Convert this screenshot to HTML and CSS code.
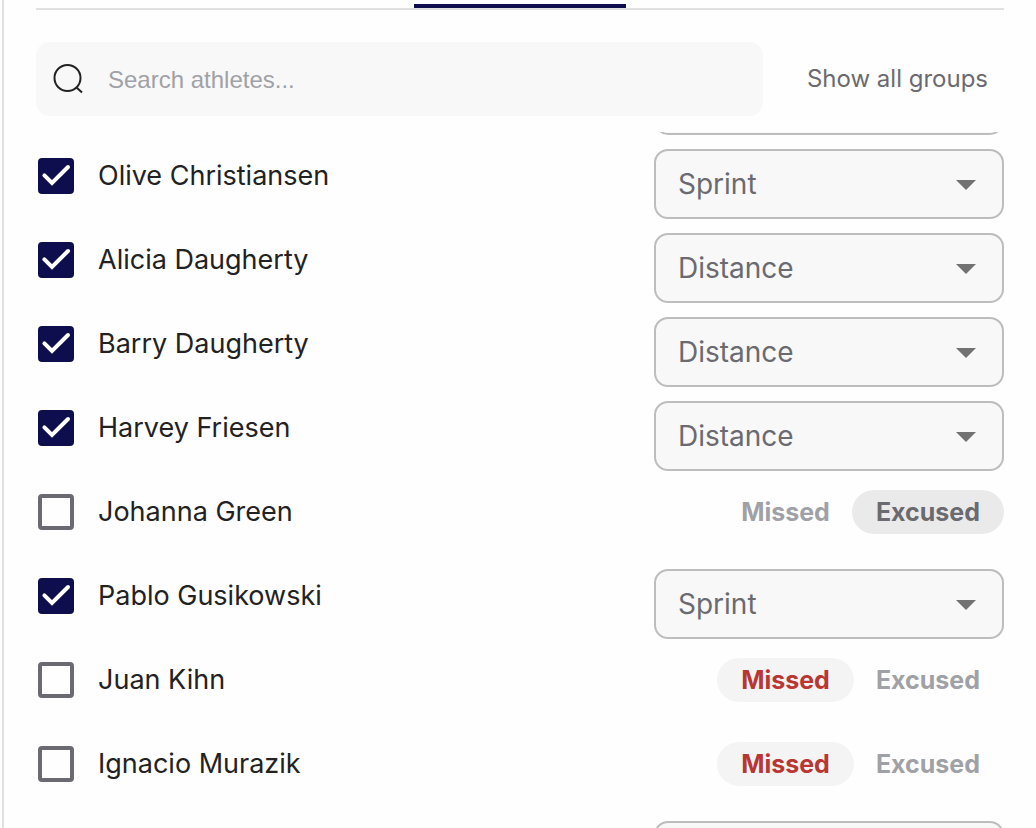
FILE: index.html
```html
<!DOCTYPE html>
<html lang="en">
<head>
    <meta charset="UTF-8">
    <meta name="viewport" content="width=device-width, initial-scale=1.0">
    <title>Attendance</title>
    <link rel="stylesheet" href="styles.css">
</head>
<body>
    <main class="panel">
        <div class="tabs">
            <div class="tab-indicator"></div>
        </div>

        <div class="toolbar">
            <label class="search">
                <svg class="search-icon" viewBox="0 0 32 32" aria-hidden="true">
                    <circle cx="15.5" cy="15" r="13"/>
                    <path d="M24.5 24.5L30 29.5"/>
                </svg>
                <input type="text" placeholder="Search athletes..." aria-label="Search athletes">
            </label>
            <button type="button" class="show-all">Show all groups</button>
        </div>

        <div class="list">
            <ul class="rows" id="rows"></ul>
        </div>
    </main>

    <script>
        // rows without a name are the ones cut off by the list edges
        const athletes = [
            { group: '' },
            { name: 'Olive Christiansen', group: 'Sprint' },
            { name: 'Alicia Daugherty', group: 'Distance' },
            { name: 'Barry Daugherty', group: 'Distance' },
            { name: 'Harvey Friesen', group: 'Distance' },
            { name: 'Johanna Green', status: 'Excused' },
            { name: 'Pablo Gusikowski', group: 'Sprint' },
            { name: 'Juan Kihn', status: 'Missed' },
            { name: 'Ignacio Murazik', status: 'Missed' },
            { group: '' }
        ];

        function nameCell(a, i) {
            if (!a.name) return '';
            return `
                <label class="athlete" for="athlete${i}">
                    <span class="check">
                        <input type="checkbox" id="athlete${i}" ${a.status ? '' : 'checked'}>
                        <svg viewBox="0 0 36 36" aria-hidden="true"><path d="M6.4 17.4L14 25L30 9"/></svg>
                    </span>
                    <span class="name">${a.name}</span>
                </label>`;
        }

        function groupSelect(a) {
            return `
                <div class="group">
                    <select aria-label="Group">
                        <option>${a.group}</option>
                    </select>
                </div>`;
        }

        function statusButtons(a) {
            return `
                <div class="status">
                    ${['Missed', 'Excused'].map(s => `
                        <button type="button" class="pill ${s.toLowerCase()} ${a.status === s ? 'active' : ''}">${s}</button>
                    `).join('')}
                </div>`;
        }

        document.getElementById('rows').innerHTML = athletes.map((a, i) => `
            <li class="row">${nameCell(a, i)}${a.status ? statusButtons(a) : groupSelect(a)}</li>
        `).join('');
    </script>
</body>
</html>
```
FILE: styles.css
```css
* {
    box-sizing: border-box;
}
body {
    margin: 0;
    height: 100vh;
    overflow: hidden;
    background-color: #fefefe;
    font-family: Inter, sans-serif;
    color: #222222;
}
button, select {
    font-family: inherit;
}
.panel {
    display: flex;
    flex-direction: column;
    height: 100%;
    margin-left: 2px;
    padding: 4px 32px 0;
    border-left: 2px solid #e0e0e0;
}
.tabs {
    display: flex;
    justify-content: center;
    border-bottom: 2px solid #e0e0e0;
}
.tab-indicator {
    width: 212px;
    height: 4px;
    background-color: #0e0e4f;
}
.toolbar {
    display: flex;
    align-items: center;
    gap: 28px;
    margin: 32px 0 16px;
}
.search {
    display: flex;
    flex: 1;
    align-items: center;
    gap: 24px;
    height: 74px;
    padding: 0 16px;
    border-radius: 14px;
    background-color: #f8f8f8;
}
.search-icon {
    flex: none;
    width: 32px;
    height: 32px;
    fill: none;
    stroke: #222222;
    stroke-width: 2;
}
.search input {
    flex: 1;
    min-width: 0;
    padding: 2px 0 0;
    border: none;
    outline: none;
    background: none;
    font-family: "Liberation Sans", Arial, sans-serif;
    font-size: 24px;
    color: #222222;
}
.search input::placeholder {
    color: #a0a1a7;
}
.show-all {
    padding: 8px 16px 10px;
    border: none;
    background: none;
    font-size: 24px;
    color: #6a6a70;
    cursor: pointer;
}

.list {
    flex: 1;
    min-height: 0;
    overflow: hidden;
}
/* scrolled part way through the first row */
.rows {
    display: flex;
    flex-direction: column;
    gap: 14px;
    margin: -67px 0 0;
    padding: 0;
    list-style: none;
}
.row {
    display: flex;
    flex: none;
    align-items: flex-start;
    height: 70px;
}
.athlete {
    display: flex;
    align-items: center;
    gap: 24px;
    height: 54px;
    padding-left: 2px;
    font-size: 27px;
    cursor: pointer;
}
.name {
    padding-bottom: 2px;
}
.check {
    position: relative;
    width: 36px;
    height: 36px;
}
.check input {
    display: block;
    appearance: none;
    width: 36px;
    height: 36px;
    margin: 0;
    border: 4px solid #6a6a70;
    border-radius: 4px;
}
.check input:checked {
    border-color: #0e0e4f;
    background-color: #0e0e4f;
}
.check svg {
    display: none;
    position: absolute;
    inset: 0;
    fill: none;
    stroke: #ffffff;
    stroke-width: 4;
    stroke-linecap: round;
    pointer-events: none;
}
.check input:checked + svg {
    display: block;
}

.group {
    position: relative;
    width: 350px;
    margin-left: auto;
}
.group select {
    appearance: none;
    display: block;
    width: 100%;
    height: 70px;
    padding: 0 60px 0 22px;
    border: 2px solid #bdbdbd;
    border-radius: 14px;
    background-color: #f8f8f8;
    font-size: 28px;
    color: #6a6a70;
}
.group::after {
    content: "";
    position: absolute;
    top: 31px;
    right: 28px;
    border: 10px solid transparent;
    border-top-color: #727272;
    border-bottom: none;
    pointer-events: none;
}

.status {
    display: flex;
    align-items: center;
    height: 54px;
    margin-left: auto;
}
.pill {
    height: 44px;
    padding: 0 24px;
    border: none;
    border-radius: 22px;
    background: none;
    font-size: 25px;
    font-weight: 700;
    color: #a0a1a7;
    cursor: pointer;
}
.pill + .pill {
    margin-left: -2px;
}
.missed.active {
    background-color: #f4f4f4;
    color: #b93632;
}
.excused.active {
    background-color: #eaeaea;
    color: #6a6a70;
}
```
